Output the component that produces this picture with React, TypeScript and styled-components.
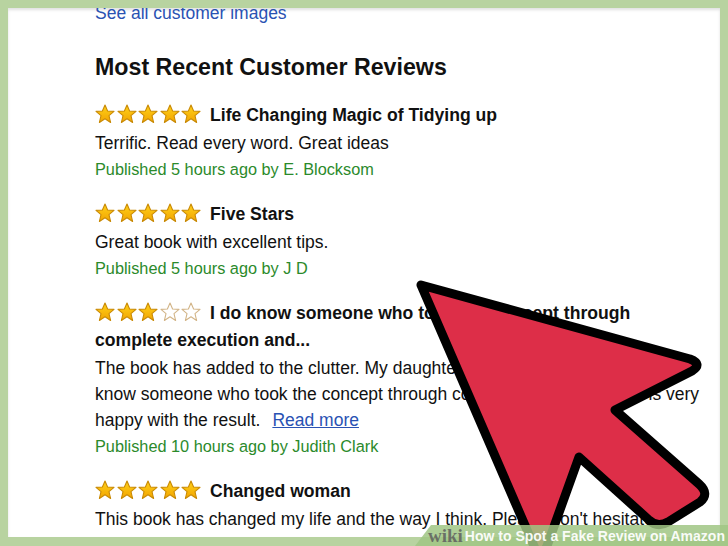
import styled, { createGlobalStyle } from "styled-components";

const GlobalStyle = createGlobalStyle`
	html, body {
		margin: 0;
		padding: 0;
		background: #b8d3a0;
	}
	body {
		font-family: "Liberation Sans", Arial, sans-serif;
	}
`;

const Frame = styled.div`
	position: relative;
	width: 728px;
	height: 546px;
	box-sizing: border-box;
	padding: 8px 8px 9px 8px;
	overflow: hidden;
`;

const Panel = styled.div`
	height: 100%;
	box-sizing: border-box;
	background: #fff;
	padding: 0 20px 0 87px;
	overflow: hidden;
	box-shadow: inset 0 2px 3px rgba(0, 0, 0, 0.12);
`;

const SeeAll = styled.a`
	display: block;
	margin-top: -8px;
	font-size: 17.5px;
	line-height: 26px;
	color: #2952b3;
	text-decoration: none;
	white-space: nowrap;
`;

const Heading = styled.h2`
	margin: 26px 0 20px;
	font-size: 23.2px;
	line-height: 30px;
	font-weight: bold;
	color: #111;
`;

const Review = styled.div`
	margin-bottom: 19px;
`;

const Title = styled.div`
	font-size: 17.6px;
	line-height: 27px;
	font-weight: bold;
	color: #111;
	margin-bottom: 1px;
	white-space: nowrap;
`;

const StarRow = styled.span`
	display: inline-flex;
	gap: 1.5px;
	margin-right: 9px;
	vertical-align: -3px;
`;

const Body = styled.div`
	font-size: 17.5px;
	line-height: 26px;
	color: #111;
	white-space: nowrap;
`;

const Published = styled.div`
	font-size: 16.3px;
	line-height: 26px;
	color: #2b8a2b;
	white-space: nowrap;
`;

const ReadMore = styled.a`
	margin-left: 12px;
	color: #2952b3;
	text-decoration: underline;
`;

const ArrowLayer = styled.svg`
	position: absolute;
	left: 0;
	top: 0;
	width: 728px;
	height: 546px;
	pointer-events: none;
`;

const Watermark = styled.div`
	position: absolute;
	right: 0;
	bottom: 0;
	width: 313px;
	height: 21px;
	background: rgba(160, 198, 132, 0.85);
	clip-path: polygon(16px 0, 100% 0, 100% 100%, 0 100%);
	display: flex;
	align-items: center;
	padding-left: 13px;
	box-sizing: border-box;
	white-space: nowrap;
`;

const WikiWord = styled.span`
	font-family: "Liberation Serif", "Times New Roman", serif;
	font-weight: bold;
	font-size: 19px;
	color: rgba(95, 95, 95, 0.85);
	margin-right: 2px;
`;

const HowTitle = styled.span`
	font-family: "Liberation Sans", Arial, sans-serif;
	font-weight: bold;
	font-size: 14px;
	color: rgba(255, 255, 255, 0.95);
`;

const STAR = "10,1 12.6,7 19,7.4 14,11.6 15.6,18.5 10,14.8 4.4,18.5 6,11.6 1,7.4 7.4,7";

const Star = ({ filled }: { filled: boolean }) => (
	<svg width="20" height="20" viewBox="0 0 20 20">
		<defs>
			<linearGradient id="gold" x1="0" y1="0" x2="0" y2="1">
				<stop offset="0" stopColor="#ffd21a" />
				<stop offset="1" stopColor="#f2a400" />
			</linearGradient>
		</defs>
		<polygon
			points={STAR}
			fill={filled ? "url(#gold)" : "#fff"}
			stroke={filled ? "#c98a06" : "#d2b487"}
			strokeWidth="1.1"
			strokeLinejoin="round"
		/>
	</svg>
);

const Stars = ({ count }: { count: number }) => (
	<StarRow>
		{[0, 1, 2, 3, 4].map(i => <Star key={i} filled={i < count} />)}
	</StarRow>
);

const App = () => {
	return (
		<>
			<GlobalStyle />
			<Frame>
				<Panel>
					<SeeAll href="#">See all customer images</SeeAll>
					<Heading>Most Recent Customer Reviews</Heading>

					<Review>
						<Title><Stars count={5} />Life Changing Magic of Tidying up</Title>
						<Body>Terrific. Read every word. Great ideas</Body>
						<Published>Published 5 hours ago by E. Blocksom</Published>
					</Review>

					<Review>
						<Title><Stars count={5} />Five Stars</Title>
						<Body>Great book with excellent tips.</Body>
						<Published>Published 5 hours ago by J D</Published>
					</Review>

					<Review>
						<Title>
							<Stars count={3} />I do know someone who took the concept through<br />
							complete execution and...
						</Title>
						<Body>
							The book has added to the clutter. My daughter and I do<br />
							know someone who took the concept through complete execution. She is very<br />
							happy with the result.<ReadMore href="#">Read more</ReadMore>
						</Body>
						<Published>Published 10 hours ago by Judith Clark</Published>
					</Review>

					<Review>
						<Title><Stars count={5} />Changed woman</Title>
						<Body>
							This book has changed my life and the way I think. Please don't hesitate<br />
							to get this, it is worth it!
						</Body>
					</Review>
				</Panel>

				<ArrowLayer viewBox="0 0 728 546">
					<path
						d="M421 285 L690 359 Q703 364 692 371 L615 410 L699 484 Q710 494 700 502 L668 522 Q657 528 649 520 L579 457 L547 546 L540 560 Z"
						fill="#dd2e48"
						stroke="#000"
						strokeWidth="9"
						strokeLinejoin="round"
					/>
				</ArrowLayer>

				<Watermark>
					<WikiWord>wiki</WikiWord>
					<HowTitle>How to Spot a Fake Review on Amazon</HowTitle>
				</Watermark>
			</Frame>
		</>
	);
};

export default App;
